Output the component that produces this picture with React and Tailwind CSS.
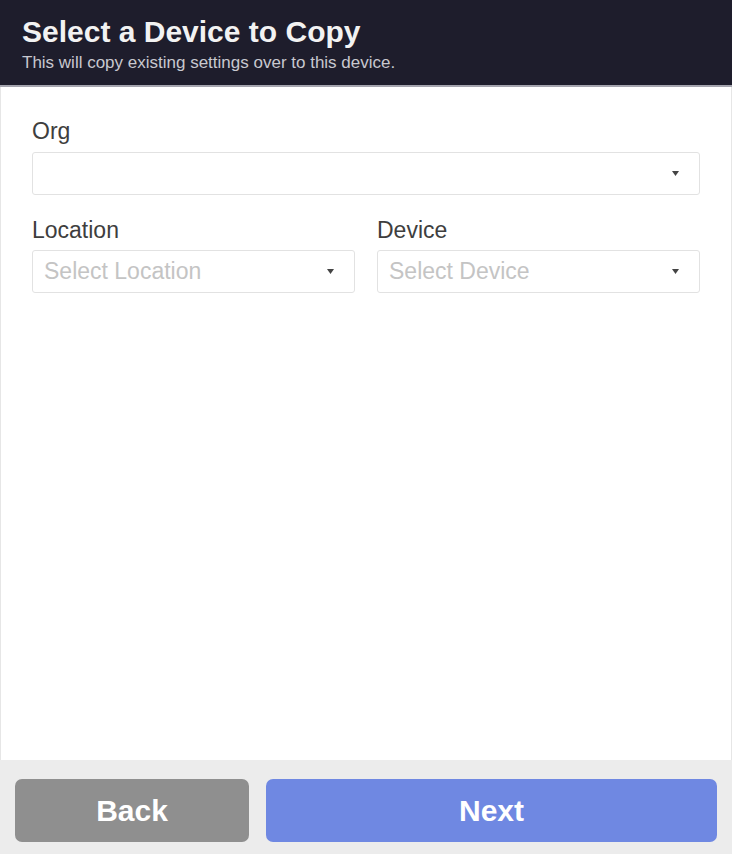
import React from 'react';

const Caret = () => (
  <svg className="w-[7px] h-[5px] text-[#444]" viewBox="0 0 7 5" fill="currentColor">
    <path d="M0 0h7L3.5 5z" />
  </svg>
);

const SelectBox = ({ placeholder }) => (
  <div className="h-[43px] border border-[#e2e2e2] rounded-[3px] flex items-center justify-between pl-[11px] pr-[20px] bg-white">
    <span className="text-[23px] text-[#c4c4c4] leading-none">{placeholder}</span>
    <Caret />
  </div>
);

const App = () => {
  return (
    <div className="h-[854px] w-full flex flex-col bg-white" style={{ fontFamily: '"Liberation Sans", Arial, sans-serif' }}>
      {/* Header */}
      <div className="h-[87px] bg-[#1e1d2c] px-[22px] pt-[15px] border-b-2 border-[#a4a4ae]">
        <h1 className="text-[30px] font-bold text-[#f2f2f2] leading-[34px]">Select a Device to Copy</h1>
        <p className="text-[17px] text-[#c8c8cf] mt-[5px] leading-none">This will copy existing settings over to this device.</p>
      </div>

      {/* Form */}
      <div className="flex-1 border-x border-[#e6e6e6] px-[31px] pt-[33px]">
        <label className="block text-[23px] text-[#3e3e3e] leading-none mb-[9px]">Org</label>
        <SelectBox placeholder="" />

        <div className="grid grid-cols-2 gap-[22px] mt-[24px]">
          <div>
            <label className="block text-[23px] text-[#3e3e3e] leading-none mb-[8px]">Location</label>
            <SelectBox placeholder="Select Location" />
          </div>
          <div>
            <label className="block text-[23px] text-[#3e3e3e] leading-none mb-[8px]">Device</label>
            <SelectBox placeholder="Select Device" />
          </div>
        </div>
      </div>

      {/* Footer */}
      <div className="h-[94px] bg-[#ececec] flex gap-[17px] px-[15px] pt-[19px] pb-[12px]">
        <button className="w-[234px] rounded-[7px] bg-[#8f8f8f] text-white text-[30px] font-bold">Back</button>
        <button className="flex-1 rounded-[7px] bg-[#6f88e2] text-white text-[30px] font-bold">Next</button>
      </div>
    </div>
  );
};

export default App;
